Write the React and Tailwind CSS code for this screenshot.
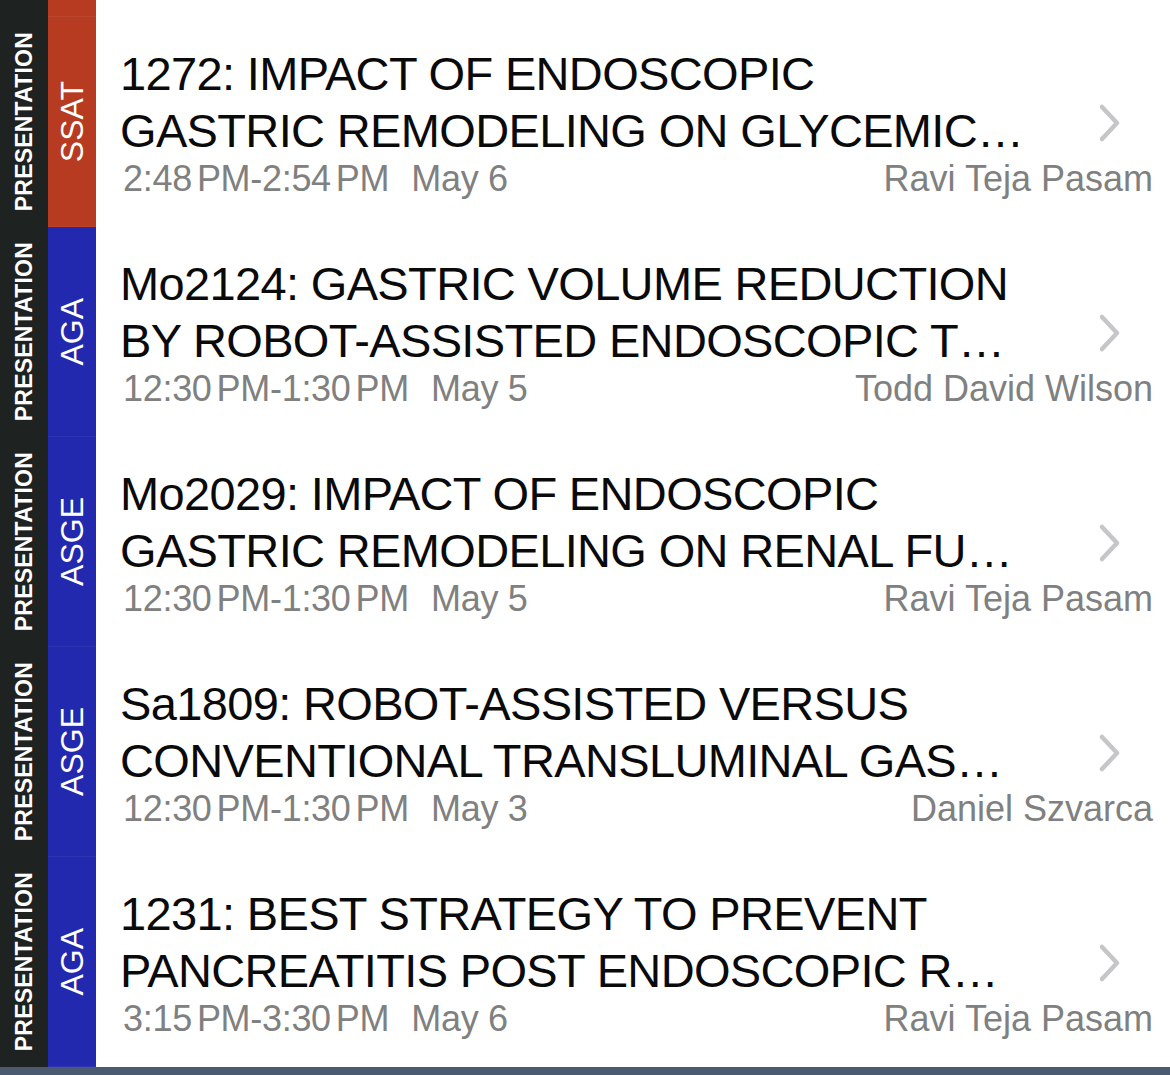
const sessions = [
  {
    society: "SSAT",
    color: "bg-[#b73b21]",
    title: ["1272: IMPACT OF ENDOSCOPIC", "GASTRIC REMODELING ON GLYCEMIC…"],
    time: ["2:48", "PM-2:54", "PM"],
    date: "May 6",
    author: "Ravi Teja Pasam",
  },
  {
    society: "AGA",
    color: "bg-[#2229ae]",
    title: ["Mo2124: GASTRIC VOLUME REDUCTION", "BY ROBOT-ASSISTED ENDOSCOPIC T…"],
    time: ["12:30", "PM-1:30", "PM"],
    date: "May 5",
    author: "Todd David Wilson",
  },
  {
    society: "ASGE",
    color: "bg-[#2229ae]",
    title: ["Mo2029: IMPACT OF ENDOSCOPIC", "GASTRIC REMODELING ON RENAL FU…"],
    time: ["12:30", "PM-1:30", "PM"],
    date: "May 5",
    author: "Ravi Teja Pasam",
  },
  {
    society: "ASGE",
    color: "bg-[#2229ae]",
    title: ["Sa1809: ROBOT-ASSISTED VERSUS", "CONVENTIONAL TRANSLUMINAL GAS…"],
    time: ["12:30", "PM-1:30", "PM"],
    date: "May 3",
    author: "Daniel Szvarca",
  },
  {
    society: "AGA",
    color: "bg-[#2229ae]",
    title: ["1231: BEST STRATEGY TO PREVENT", "PANCREATITIS POST ENDOSCOPIC R…"],
    time: ["3:15", "PM-3:30", "PM"],
    date: "May 6",
    author: "Ravi Teja Pasam",
  },
];

function Strips({ society, color }) {
  return (
    <>
      {/* type strip */}
      <div className="w-[48px] shrink-0 bg-[#1e2321] flex items-center justify-center">
        <span className="[writing-mode:vertical-rl] rotate-180 text-white font-bold text-[23px] leading-none tracking-[0.2px]">
          PRESENTATION
        </span>
      </div>
      {/* society strip */}
      <div className={`w-[48px] shrink-0 ${color} flex items-center justify-center border-b border-white/5`}>
        <span className="[writing-mode:vertical-rl] rotate-180 text-white text-[32px] leading-none">
          {society}
        </span>
      </div>
    </>
  );
}

function Chevron() {
  return (
    <svg width="24" height="40" viewBox="0 0 24 40" fill="none">
      <path d="M4 4 L19 20 L4 36" stroke="#c6c6c8" strokeWidth="4.5" strokeLinecap="round" strokeLinejoin="round" />
    </svg>
  );
}

function SessionRow({ s }) {
  return (
    <div className="flex h-[210px] bg-white">
      <Strips society={s.society} color={s.color} />
      <div className="flex-1 grid grid-cols-[1fr_auto] grid-rows-[auto_auto] content-center pl-[24px] pr-[17px]">
        <div className="col-start-1 row-start-1 text-[47px] leading-[57px] tracking-[-0.65px] text-[#0a0a0a] whitespace-nowrap overflow-hidden">
          <div>{s.title[0]}</div>
          <div>{s.title[1]}</div>
        </div>
        <div className="col-start-2 row-start-1 row-span-2 self-center mr-[31px] pt-[2px]">
          <Chevron />
        </div>
        <div className="col-start-1 col-span-2 row-start-2 flex justify-between text-[36px] leading-[40px] text-[#808080] whitespace-nowrap">
          <div className="ml-[3px] tracking-[-0.3px]">
            <span>{s.time[0]}</span>
            <span className="ml-[5px]">{s.time[1]}</span>
            <span className="ml-[5px]">{s.time[2]}</span>
            <span className="ml-[22px]">{s.date}</span>
          </div>
          <span>{s.author}</span>
        </div>
      </div>
    </div>
  );
}

export default function App() {
  return (
    <div className="h-[1075px] overflow-hidden bg-white font-['Liberation_Sans',Arial,sans-serif]">
      {/* list scrolled so the previous row is mostly above the viewport */}
      <div className="-mt-[193px]">
        <div className="flex h-[210px]">
          <Strips society="SSAT" color="bg-[#b73b21]" />
          <div className="flex-1 bg-white" />
        </div>
        {sessions.map((s, i) => (
          <SessionRow key={i} s={s} />
        ))}
        <div className="h-[60px] bg-[#4a5a71]" />
      </div>
    </div>
  );
}
